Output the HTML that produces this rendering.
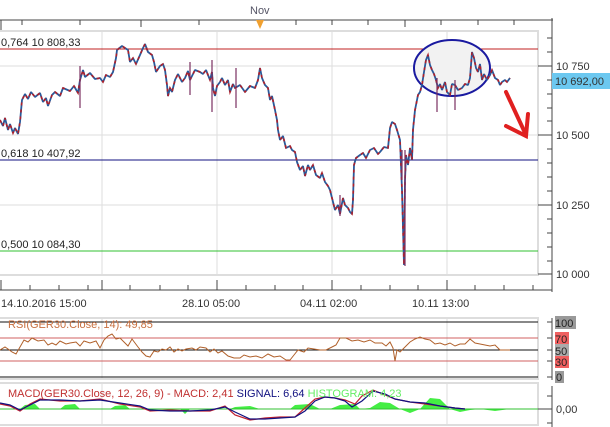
<!DOCTYPE html>
<html><head><meta charset="utf-8"><style>
html,body{margin:0;padding:0;background:#fff;}
svg{display:block;font-family:"Liberation Sans",sans-serif;}
</style></head><body>
<svg width="610" height="427" viewBox="0 0 610 427" xmlns="http://www.w3.org/2000/svg">
<rect width="610" height="427" fill="#fff"/>
<text x="250" y="14" font-size="11" fill="#556">Nov</text>
<line x1="0" y1="20" x2="553" y2="20" stroke="#444"/>
<g stroke="#444">
<line x1="1" y1="20" x2="1" y2="30"/><line x1="22" y1="20" x2="22" y2="25"/><line x1="80" y1="20" x2="80" y2="25"/><line x1="141" y1="20" x2="141" y2="27"/><line x1="199" y1="20" x2="199" y2="25"/><line x1="296" y1="20" x2="296" y2="25"/><line x1="332" y1="20" x2="332" y2="25"/><line x1="368" y1="20" x2="368" y2="25"/><line x1="405" y1="20" x2="405" y2="27"/><line x1="441" y1="20" x2="441" y2="25"/><line x1="478" y1="20" x2="478" y2="25"/><line x1="514" y1="20" x2="514" y2="25"/>
</g>
<polygon points="256,20 264,20 260,29" fill="#f0a030"/>
<rect x="-2" y="31" width="540" height="244" fill="#fff" stroke="#ddd" stroke-width="2"/>
<g stroke="#ddd">
<line x1="102" y1="31" x2="102" y2="275"/><line x1="217" y1="31" x2="217" y2="275"/><line x1="332" y1="31" x2="332" y2="275"/><line x1="447" y1="31" x2="447" y2="275"/>
<line x1="0" y1="66" x2="538" y2="66"/><line x1="0" y1="135" x2="538" y2="135"/><line x1="0" y1="205" x2="538" y2="205"/>
</g>
<line x1="0" y1="49" x2="538" y2="49" stroke="#c02020"/>
<line x1="0" y1="160" x2="538" y2="160" stroke="#101080"/>
<line x1="0" y1="251" x2="538" y2="251" stroke="#30c030"/>
<g font-size="11" fill="#222">
<text x="1" y="46">0,764 10 808,33</text>
<text x="1" y="157">0,618 10 407,92</text>
<text x="1" y="248">0,500 10 084,30</text>
</g>
<ellipse cx="452" cy="68" rx="38" ry="28" fill="#f2f2f2" stroke="#1a1aa0" stroke-width="2"/>
<polyline fill="none" stroke="#2a5a9a" stroke-width="1.8" stroke-linejoin="bevel" points="0,120 3,126 5,118 8,130 10,124 13,133 15,128 18,134 20,122 22,100 25,94 28,99 31,92 35,97 40,93 43,102 46,98 48,106 52,95 55,92 60,96 63,88 70,91 74,86 78,93 80,80 83,70 85,77 90,73 95,79 100,78 103,82 106,75 110,77 113,72 116,58 117,50 122,46 128,50 130,62 133,58 136,64 140,55 143,48 145,44 148,52 152,55 154,62 156,72 160,66 163,64 165,70 167,85 168,96 170,88 172,92 175,80 178,74 182,82 185,78 188,71 190,80 195,70 200,72 203,74 206,70 210,80 212,72 213,88 215,96 217,86 220,82 222,78 225,85 228,80 230,92 233,84 235,88 240,85 245,92 250,86 255,88 258,80 260,68 262,78 265,85 268,88 270,100 272,96 275,110 277,120 278,130 280,140 283,136 286,148 290,146 292,150 295,152 297,162 300,170 303,166 305,176 308,165 310,170 313,165 316,175 320,178 322,173 325,182 328,186 330,190 332,198 335,210 338,205 340,214 343,198 345,205 348,208 350,212 352,214 353,200 354,165 356,158 360,155 363,153 366,158 370,150 374,148 378,154 380,152 384,147 388,148 390,128 392,122 395,124 397,130 400,140 402,190 404,265 405,180 406,155 408,165 410,148 412,160 413,130 415,110 418,95 420,92 422,85 424,72 426,60 428,55 430,65 432,70 434,74 436,80 438,88 440,84 442,90 445,82 447,92 450,95 452,84 455,85 458,90 462,88 465,84 468,85 470,78 472,52 474,58 476,68 478,72 480,64 482,80 484,74 487,80 490,75 492,70 495,78 498,80 500,85 502,82 505,80 507,82 510,78"/>
<polyline fill="none" stroke="#b0202a" stroke-width="1.6" stroke-dasharray="3 4" points="0,120 3,126 5,118 8,130 10,124 13,133 15,128 18,134 20,122 22,100 25,94 28,99 31,92 35,97 40,93 43,102 46,98 48,106 52,95 55,92 60,96 63,88 70,91 74,86 78,93 80,80 83,70 85,77 90,73 95,79 100,78 103,82 106,75 110,77 113,72 116,58 117,50 122,46 128,50 130,62 133,58 136,64 140,55 143,48 145,44 148,52 152,55 154,62 156,72 160,66 163,64 165,70 167,85 168,96 170,88 172,92 175,80 178,74 182,82 185,78 188,71 190,80 195,70 200,72 203,74 206,70 210,80 212,72 213,88 215,96 217,86 220,82 222,78 225,85 228,80 230,92 233,84 235,88 240,85 245,92 250,86 255,88 258,80 260,68 262,78 265,85 268,88 270,100 272,96 275,110 277,120 278,130 280,140 283,136 286,148 290,146 292,150 295,152 297,162 300,170 303,166 305,176 308,165 310,170 313,165 316,175 320,178 322,173 325,182 328,186 330,190 332,198 335,210 338,205 340,214 343,198 345,205 348,208 350,212 352,214 353,200 354,165 356,158 360,155 363,153 366,158 370,150 374,148 378,154 380,152 384,147 388,148 390,128 392,122 395,124 397,130 400,140 402,190 404,265 405,180 406,155 408,165 410,148 412,160 413,130 415,110 418,95 420,92 422,85 424,72 426,60 428,55 430,65 432,70 434,74 436,80 438,88 440,84 442,90 445,82 447,92 450,95 452,84 455,85 458,90 462,88 465,84 468,85 470,78 472,52 474,58 476,68 478,72 480,64 482,80 484,74 487,80 490,75 492,70 495,78 498,80 500,85 502,82 505,80 507,82 510,78"/>
<g stroke="#7a3060" stroke-width="1.2">
<line x1="236" y1="68" x2="236" y2="108"/><line x1="212" y1="60" x2="212" y2="112"/><line x1="190" y1="62" x2="190" y2="95"/><line x1="80" y1="66" x2="80" y2="108"/><line x1="405" y1="150" x2="405" y2="266"/><line x1="437" y1="78" x2="437" y2="112"/><line x1="455" y1="80" x2="455" y2="110"/><line x1="340" y1="195" x2="340" y2="216"/><line x1="402" y1="150" x2="402" y2="180"/>
</g>
<g stroke="#e02020" stroke-width="4" stroke-linecap="round" fill="none">
<line x1="506" y1="92" x2="526" y2="135"/>
<polyline points="506,126 526,136 528,114"/>
</g>
<line x1="552" y1="18" x2="552" y2="292" stroke="#444"/>
<g stroke="#444">
<line x1="538" y1="66" x2="552" y2="66"/><line x1="538" y1="135" x2="552" y2="135"/><line x1="538" y1="205" x2="552" y2="205"/><line x1="538" y1="274" x2="552" y2="274"/>
<line x1="547" y1="38" x2="552" y2="38"/><line x1="547" y1="52" x2="552" y2="52"/><line x1="547" y1="80" x2="552" y2="80"/><line x1="547" y1="94" x2="552" y2="94"/><line x1="547" y1="108" x2="552" y2="108"/><line x1="547" y1="121" x2="552" y2="121"/><line x1="547" y1="149" x2="552" y2="149"/><line x1="547" y1="163" x2="552" y2="163"/><line x1="547" y1="177" x2="552" y2="177"/><line x1="547" y1="191" x2="552" y2="191"/><line x1="547" y1="219" x2="552" y2="219"/><line x1="547" y1="233" x2="552" y2="233"/><line x1="547" y1="247" x2="552" y2="247"/><line x1="547" y1="261" x2="552" y2="261"/>
</g>
<rect x="552" y="73" width="58" height="16" fill="#6cc8f0"/>
<g font-size="11" fill="#333">
<text x="556" y="70">10 750</text>
<text x="555" y="85">10 692,00</text>
<text x="556" y="139">10 500</text>
<text x="556" y="209">10 250</text>
<text x="556" y="278">10 000</text>
</g>
<line x1="0" y1="290" x2="552" y2="290" stroke="#444"/>
<g stroke="#444">
<line x1="1" y1="280" x2="1" y2="290"/><line x1="102" y1="280" x2="102" y2="290"/><line x1="217" y1="280" x2="217" y2="290"/><line x1="332" y1="280" x2="332" y2="290"/><line x1="447" y1="280" x2="447" y2="290"/>
<line x1="30" y1="285" x2="30" y2="290"/><line x1="59" y1="285" x2="59" y2="290"/><line x1="88" y1="285" x2="88" y2="290"/><line x1="130" y1="285" x2="130" y2="290"/><line x1="160" y1="285" x2="160" y2="290"/><line x1="188" y1="285" x2="188" y2="290"/><line x1="246" y1="285" x2="246" y2="290"/><line x1="275" y1="285" x2="275" y2="290"/><line x1="303" y1="285" x2="303" y2="290"/><line x1="361" y1="285" x2="361" y2="290"/><line x1="390" y1="285" x2="390" y2="290"/><line x1="418" y1="285" x2="418" y2="290"/><line x1="475" y1="285" x2="475" y2="290"/><line x1="504" y1="285" x2="504" y2="290"/><line x1="533" y1="285" x2="533" y2="290"/>
</g>
<g font-size="11" fill="#333">
<text x="1" y="307">14.10.2016 15:00</text>
<text x="182" y="307">28.10 05:00</text>
<text x="300" y="307">04.11 02:00</text>
<text x="412" y="307">10.11 13:00</text>
</g>
<rect x="-2" y="318" width="540" height="61" fill="#fff" stroke="#ddd" stroke-width="2"/>
<g stroke="#ddd"><line x1="102" y1="318" x2="102" y2="379"/><line x1="447" y1="318" x2="447" y2="379"/></g>
<line x1="0" y1="322" x2="538" y2="322" stroke="#111"/>
<line x1="0" y1="338" x2="538" y2="338" stroke="#d06060"/>
<line x1="0" y1="350" x2="538" y2="350" stroke="#111"/>
<line x1="0" y1="361" x2="538" y2="361" stroke="#d06060"/>
<line x1="0" y1="377" x2="538" y2="377" stroke="#111"/>
<text x="8" y="328" font-size="11" fill="#c87040">RSI(GER30.Close, 14): 49,85</text>
<polyline fill="none" stroke="#b0602a" stroke-width="1" points="0,350 5,347 8,349 12,352 16,354 20,347 24,340 28,342 32,338 38,341 44,340 48,345 52,343 56,345 60,341 66,344 70,343 76,342 80,346 84,341 90,343 96,341 100,348 104,340 108,336 112,334 116,339 120,338 124,342 128,346 132,339 138,347 142,352 146,356 150,357 154,351 158,352 162,349 166,350 170,347 174,352 178,349 182,351 186,349 192,348 196,350 200,347 206,348 210,352 214,349 218,353 222,351 228,356 234,358 240,358 244,355 250,357 256,356 262,358 268,354 274,357 280,356 286,360 290,360 294,355 298,350 304,352 308,348 314,349 320,350 326,350 332,347 336,345 340,338 346,338 352,341 358,340 364,342 370,340 375,343 382,343 386,346 390,342 393,348 395,361 397,350 400,352 403,349 406,346 410,342 415,339 420,337 425,339 430,340 435,344 440,343 445,345 450,343 455,346 460,344 465,344 470,339 475,343 480,344 485,345 490,346 495,345 500,350 505,350 510,350"/>
<line x1="552" y1="318" x2="552" y2="380" stroke="#444"/>
<g stroke="#444"><line x1="547" y1="322" x2="552" y2="322"/><line x1="547" y1="338" x2="552" y2="338"/><line x1="547" y1="350" x2="552" y2="350"/><line x1="547" y1="361" x2="552" y2="361"/><line x1="547" y1="377" x2="552" y2="377"/></g>
<rect x="555" y="316" width="21" height="13" fill="#999"/>
<rect x="555" y="332" width="14" height="12" fill="#f06060"/>
<rect x="555" y="344" width="14" height="12" fill="#aaa"/>
<rect x="555" y="356" width="14" height="12" fill="#f06060"/>
<rect x="555" y="371" width="9" height="12" fill="#999"/>
<g font-size="11" fill="#222">
<text x="555" y="327">100</text><text x="555" y="343">70</text><text x="555" y="355">50</text><text x="555" y="366">30</text><text x="556" y="381">0</text>
</g>
<rect x="-2" y="383" width="540" height="42" fill="#fff" stroke="#ddd" stroke-width="2"/>
<g stroke="#ddd"><line x1="102" y1="383" x2="102" y2="425"/><line x1="447" y1="383" x2="447" y2="425"/></g>
<path fill="#44ee44" d="M20,409 L25,405 L35,404 L40,409 L60,409 L65,405 L75,404 L80,409 L110,409 L115,406 L125,405 L130,409 L180,409 L185,414 L190,409 L230,409 L235,407 L250,406 L260,409 L290,409 L295,405 L310,404 L320,409 L330,409 L340,405 L355,404 L360,409 L370,408 L380,402 L390,403 L400,409 L410,413 L420,409 L430,398 L440,399 L445,404 L450,409 L460,412 L470,410 L480,409 L495,411 L510,409 Z"/>
<line x1="0" y1="409" x2="538" y2="409" stroke="#30c030"/>
<polyline fill="none" stroke="#c02030" stroke-width="1.2" points="0,404 10,406 20,411 30,404 40,399 60,401 80,401 100,399 120,404 140,407 150,411 170,410 190,411 210,411 225,406 235,415 250,420 265,418 280,417 295,417 305,408 315,399 325,397 335,398 345,400 355,404 362,396 373,390 385,395 395,399 410,402 425,404 440,406 455,408 465,409"/>
<polyline fill="none" stroke="#101080" stroke-width="1.2" points="0,403 10,405 20,410 30,405 40,400 60,400 80,401 100,400 120,403 140,406 150,410 170,411 190,411 210,410 225,407 235,412 250,419 265,419 280,418 295,417 305,411 315,401 325,397 335,398 345,401 352,407 362,401 373,391 385,394 395,399 410,402 425,403 440,406 455,408 465,409"/>
<text x="8" y="397" font-size="11"><tspan fill="#c03030">MACD(GER30.Close, 12, 26, 9) -  MACD: 2,41</tspan><tspan fill="#101080">  SIGNAL: 6,64</tspan><tspan fill="#66ee66">  HISTOGRAM: 4,23</tspan></text>
<line x1="552" y1="386" x2="552" y2="427" stroke="#444"/>
<g stroke="#444"><line x1="547" y1="396" x2="552" y2="396"/><line x1="538" y1="409" x2="552" y2="409"/><line x1="547" y1="423" x2="552" y2="423"/></g>
<text x="556" y="413" font-size="11" fill="#333">0,00</text>
</svg>
</body></html>
